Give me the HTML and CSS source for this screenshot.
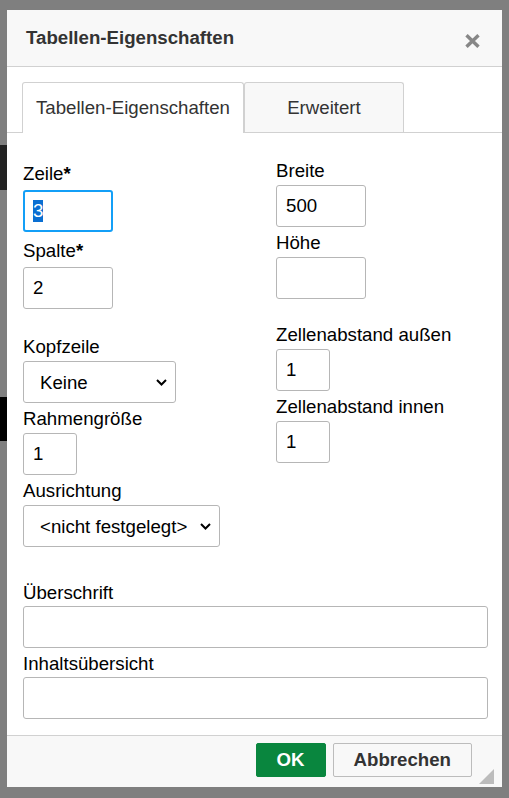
FILE: index.html
```html
<!DOCTYPE html>
<html lang="de">
<head>
    <meta charset="utf-8">
    <title>Tabellen-Eigenschaften</title>
    <link rel="stylesheet" href="styles.css">
</head>
<body>
    <!-- the page behind the dialog, mostly hidden -->
    <div class="page">
        <div class="pageNav"></div>
        <div class="pageBlock"></div>
    </div>
    <div class="overlay"></div>

    <div class="dialog">
        <div class="dialogHead">
            <span class="dialogTitle">Tabellen-Eigenschaften</span>
            <a class="closeBtn" href="#" title="Schließen">
                <svg width="15" height="14" viewBox="0 0 15 14">
                    <path d="M1.5 1.2 L13.5 12.8 M13.5 1.2 L1.5 12.8" stroke="#878787" stroke-width="3.4" fill="none"/>
                </svg>
            </a>
        </div>

        <div class="tabs">
            <a class="tab active" href="#">Tabellen-Eigenschaften</a>
            <a class="tab wide" href="#">Erweitert</a>
        </div>

        <div class="dialogBody">
            <div class="cols">
                <div class="col">
                    <div class="field">
                        <label class="required" for="rows">Zeile</label>
                        <input class="txt mid focused" id="rows" value="3" autofocus>
                    </div>
                    <div class="field">
                        <label class="required" for="cols">Spalte</label>
                        <input class="txt mid" id="cols" value="2">
                    </div>

                    <div class="field groupLeft">
                        <label for="headers">Kopfzeile</label>
                        <div class="selectWrap">
                            <select class="sel headSel" id="headers">
                                <option>Keine</option>
                                <option>Erste Zeile</option>
                                <option>Erste Spalte</option>
                                <option>Beide</option>
                            </select>
                            <svg class="chev" width="11" height="7" viewBox="0 0 11 7"><path d="M1 1 L5.5 5.5 L10 1" stroke="#000" stroke-width="2" fill="none"/></svg>
                        </div>
                    </div>
                    <div class="field">
                        <label for="border">Rahmengröße</label>
                        <input class="txt small" id="border" value="1">
                    </div>
                    <div class="field">
                        <label for="align">Ausrichtung</label>
                        <div class="selectWrap">
                            <select class="sel alignSel" id="align">
                                <option>&lt;nicht festgelegt&gt;</option>
                                <option>Links</option>
                                <option>Zentriert</option>
                                <option>Rechts</option>
                            </select>
                            <svg class="chev" width="11" height="7" viewBox="0 0 11 7"><path d="M1 1 L5.5 5.5 L10 1" stroke="#000" stroke-width="2" fill="none"/></svg>
                        </div>
                    </div>
                </div>

                <div class="col">
                    <div class="field">
                        <label for="width">Breite</label>
                        <input class="txt mid" id="width" value="500">
                    </div>
                    <div class="field">
                        <label for="height">Höhe</label>
                        <input class="txt mid" id="height" value="">
                    </div>

                    <div class="field groupRight">
                        <label for="spacing">Zellenabstand außen</label>
                        <input class="txt small" id="spacing" value="1">
                    </div>
                    <div class="field">
                        <label for="padding">Zellenabstand innen</label>
                        <input class="txt small" id="padding" value="1">
                    </div>
                </div>
            </div>

            <div class="captionPart">
                <div class="field">
                    <label for="caption">Überschrift</label>
                    <input class="txt full" id="caption" value="">
                </div>
                <div class="field">
                    <label for="summary">Inhaltsübersicht</label>
                    <input class="txt full" id="summary" value="">
                </div>
            </div>
        </div>

        <div class="dialogFoot">
            <button class="btn okBtn">OK</button>
            <button class="btn cancelBtn">Abbrechen</button>
        </div>

        <svg class="grip" width="15" height="15" viewBox="0 0 15 15"><polygon points="15,0 15,15 0,15" fill="#bcbcbc"/></svg>
    </div>

    <script>
        // Zeile is focused with its value selected when the dialog opens
        let rows = document.getElementById("rows");
        rows.focus();
        rows.select();
    </script>
</body>
</html>
```

FILE: styles.css
```css
body {
    margin: 0;
    background: #fff;
    font-family: "Liberation Sans", Arial, sans-serif;
}

/* page under the overlay */
.page {
    padding-top: 145px;
}

.pageNav {
    width: 60px;
    height: 45px;
    background: #444;
}

.pageBlock {
    margin-top: 207px;
    width: 60px;
    height: 44px;
    background: #000;
}

.overlay {
    position: fixed;
    top: 0;
    left: 0;
    right: 0;
    bottom: 0;
    background: rgba(0, 0, 0, 0.5);
}

/* dialog */
.dialog {
    position: absolute;
    left: 7px;
    top: 10px;
    width: 495px;
    height: 777px;
    background: #fff;
    display: flex;
    flex-direction: column;
    font-size: 18.67px;
    color: #000;
}

.dialogHead {
    height: 56px;
    flex: none;
    background: #f8f8f8;
    border-bottom: 1px solid #d1d1d1;
    display: flex;
    align-items: center;
    justify-content: space-between;
    padding: 0 22px 0 19px;
}

.dialogTitle {
    font-weight: bold;
    color: #333;
}

.closeBtn {
    display: flex;
    margin-top: 5px;
}

.tabs {
    flex: none;
    display: flex;
    align-items: flex-start;
    height: 50px;
    padding: 15px 0 0 15px;
    border-bottom: 1px solid #d1d1d1;
}

.tab {
    box-sizing: border-box;
    height: 50px;
    padding: 0 13px;
    line-height: 49px;
    border: 1px solid #d1d1d1;
    border-bottom: none;
    border-radius: 3px 3px 0 0;
    background: #f8f8f8;
    color: #333;
    text-decoration: none;
    text-align: center;
}

.tab.active {
    height: 51px;
    background: #fff;
}

.tab.wide {
    width: 160px;
}

.dialogBody {
    flex: 1;
    padding: 27px 14px 0 16px;
}

.cols {
    display: grid;
    grid-template-columns: 253px 1fr;
}

.field {
    margin-bottom: 5px;
}

.field label {
    display: block;
    line-height: 22px;
    margin-bottom: 3px;
}

.field label.required {
    line-height: 27px;
}

.field label.required::after {
    content: "*";
    font-weight: bold;
}

.groupLeft {
    margin-top: 27px;
}

.groupRight {
    margin-top: 25px;
}

.txt {
    display: block;
    box-sizing: border-box;
    height: 42px;
    padding: 0 9px;
    border: 1px solid #b6b6b6;
    border-radius: 3px;
    background: #fff;
    color: #000;
    font-family: inherit;
    font-size: 18.67px;
    outline: none;
}

.txt.focused {
    border: 2px solid #139ff7;
    padding: 0 8px;
}

.txt.focused::selection {
    background: #0a6fd2;
    color: #fff;
}

.mid {
    width: 90px;
}

.small {
    width: 54px;
}

.full {
    width: 100%;
}

.selectWrap {
    position: relative;
    display: inline-block;
    vertical-align: top;
}

.sel {
    display: block;
    box-sizing: border-box;
    height: 42px;
    padding: 0 30px 0 16px;
    border: 1px solid #b6b6b6;
    border-radius: 3px;
    background: #fff;
    color: #000;
    font-family: inherit;
    font-size: 18.67px;
    appearance: none;
    -webkit-appearance: none;
    outline: none;
}

.headSel {
    width: 153px;
}

.alignSel {
    width: 197px;
}

.chev {
    position: absolute;
    right: 9px;
    top: 18px;
    pointer-events: none;
}

.captionPart {
    margin-top: 30px;
}

.captionPart .field label {
    margin-bottom: 2px;
}

.dialogFoot {
    flex: none;
    box-sizing: border-box;
    height: 52px;
    background: #f8f8f8;
    border-top: 1px solid #d1d1d1;
    padding: 7px 30px 0;
    display: flex;
    justify-content: flex-end;
    align-items: flex-start;
    gap: 7px;
}

.btn {
    height: 34px;
    padding: 0 20px;
    border-radius: 2px;
    font-family: inherit;
    font-size: 18.67px;
    font-weight: bold;
}

.okBtn {
    background: #09863e;
    border: 1px solid #09863e;
    color: #fff;
}

.cancelBtn {
    background: #f8f8f8;
    border: 1px solid #bcbcbc;
    color: #333;
}

.grip {
    position: absolute;
    right: 8px;
    bottom: 3px;
}
```
